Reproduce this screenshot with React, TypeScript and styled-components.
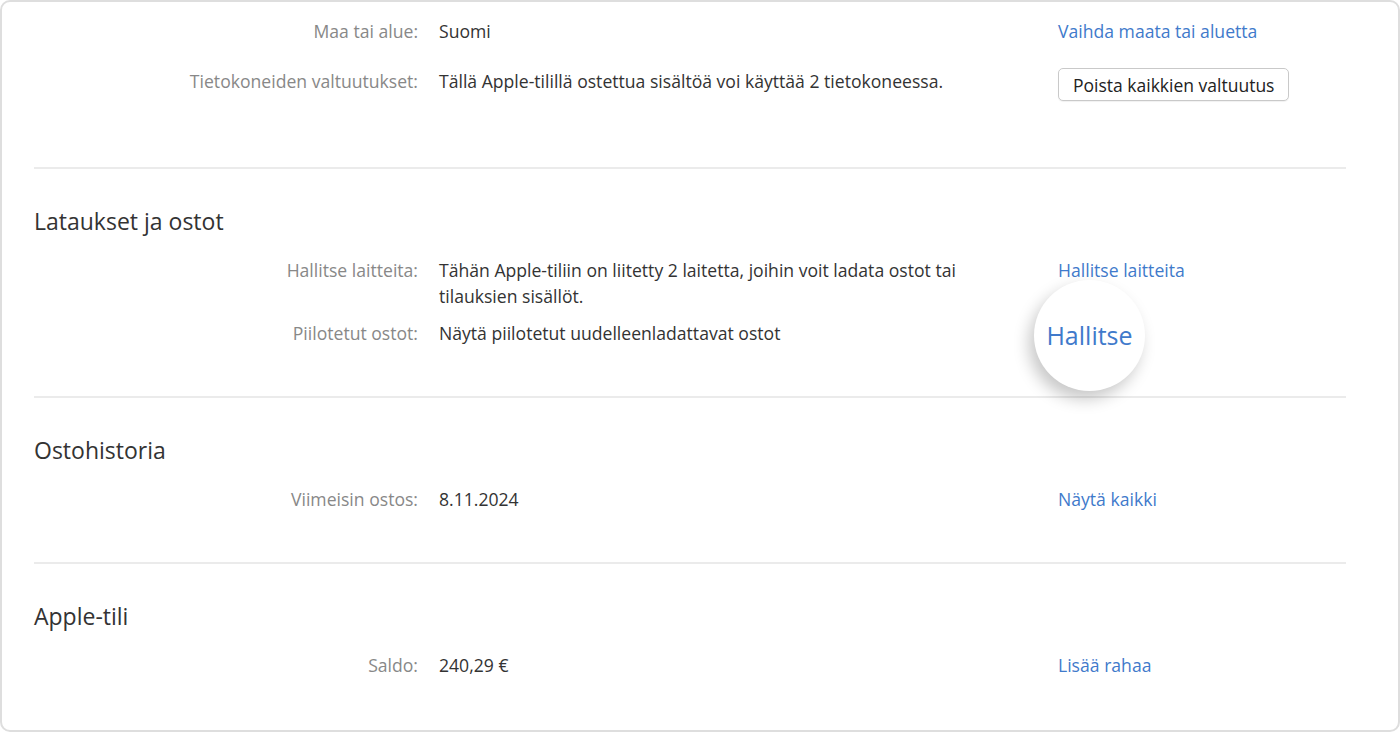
import styled, { createGlobalStyle } from "styled-components";

const GlobalStyle = createGlobalStyle`
  html, body {
    margin: 0;
    padding: 0;
    background: #ffffff;
  }
  * {
    box-sizing: border-box;
  }
`;

type Row = {
  label: string;
  value: string;
  link?: string;
  button?: string;
  zoomed?: boolean;
};

type Section = {
  title?: string;
  rows: Row[];
};

const sections: Section[] = [
  {
    rows: [
      { label: "Maa tai alue:", value: "Suomi", link: "Vaihda maata tai aluetta" },
      {
        label: "Tietokoneiden valtuutukset:",
        value: "Tällä Apple-tilillä ostettua sisältöä voi käyttää 2 tietokoneessa.",
        button: "Poista kaikkien valtuutus",
      },
    ],
  },
  {
    title: "Lataukset ja ostot",
    rows: [
      {
        label: "Hallitse laitteita:",
        value: "Tähän Apple-tiliin on liitetty 2 laitetta, joihin voit ladata ostot tai tilauksien sisällöt.",
        link: "Hallitse laitteita",
      },
      {
        label: "Piilotetut ostot:",
        value: "Näytä piilotetut uudelleenladattavat ostot",
        link: "Hallitse",
        zoomed: true,
      },
    ],
  },
  {
    title: "Ostohistoria",
    rows: [{ label: "Viimeisin ostos:", value: "8.11.2024", link: "Näytä kaikki" }],
  },
  {
    title: "Apple-tili",
    rows: [{ label: "Saldo:", value: "240,29 €", link: "Lisää rahaa" }],
  },
];

const App = () => {
  return (
    <>
      <GlobalStyle />
      <Card>
        {sections.map((section, i) => (
          <StyledSection key={i} $first={i === 0}>
            {section.title && <Title>{section.title}</Title>}
            <Rows $first={i === 0}>
              {section.rows.map((row) => (
                <InfoRow key={row.label}>
                  <Label>{row.label}</Label>
                  <Value>{row.value}</Value>
                  <Action>
                    {row.button && <OutlineButton>{row.button}</OutlineButton>}
                    {row.link && <Link href="#">{row.link}</Link>}
                    {row.zoomed && (
                      <Magnifier>
                        <MagnifiedLink>{row.link}</MagnifiedLink>
                      </Magnifier>
                    )}
                  </Action>
                </InfoRow>
              ))}
            </Rows>
          </StyledSection>
        ))}
      </Card>
    </>
  );
};

const Card = styled.div`
  width: 1400px;
  height: 732px;
  border: 2px solid #dedede;
  border-radius: 10px;
  background: #ffffff;
  padding: 0 52px 0 32px;
  font-family: "Open Sans", "Noto Sans", sans-serif;
  color: #333333;
  overflow: hidden;
`;

const StyledSection = styled.section<{ $first: boolean }>`
  padding: ${(p) => (p.$first ? "16px 0 66px" : "37px 0 50px")};
  border-top: ${(p) => (p.$first ? "none" : "2px solid #ebebeb")};
`;

const Title = styled.h2`
  margin: 0 0 21px;
  font-size: 23px;
  line-height: 30px;
  font-weight: 400;
  color: #333333;
`;

const Rows = styled.div<{ $first: boolean }>`
  display: flex;
  flex-direction: column;
  gap: ${(p) => (p.$first ? "24px" : "11px")};
`;

const InfoRow = styled.div`
  display: grid;
  grid-template-columns: 384px 598px 1fr;
  column-gap: 21px;
  align-items: start;
  font-size: 17.6px;
  line-height: 26px;
`;

const Label = styled.div`
  text-align: right;
  color: #888888;
`;

const Value = styled.div`
  color: #333333;
  padding-right: 30px;
`;

const Action = styled.div`
  position: relative;
`;

const Link = styled.a`
  color: #3f7acb;
  text-decoration: none;
`;

const OutlineButton = styled.button`
  height: 33px;
  padding: 0 14px;
  border: 1px solid #c9c9c9;
  border-radius: 5px;
  background: #ffffff;
  box-shadow: 0 1px 1px rgba(0, 0, 0, 0.06);
  font-family: inherit;
  font-size: 17.5px;
  color: #222222;
  cursor: pointer;
`;

const Magnifier = styled.div`
  position: absolute;
  left: -24px;
  top: -40px;
  width: 111px;
  height: 111px;
  border-radius: 50%;
  background: #ffffff;
  box-shadow: -5px 8px 16px rgba(0, 0, 0, 0.22);
  display: flex;
  align-items: center;
  justify-content: center;
`;

const MagnifiedLink = styled.span`
  font-size: 25px;
  line-height: 1;
  color: #3f7acb;
`;

export default App;
